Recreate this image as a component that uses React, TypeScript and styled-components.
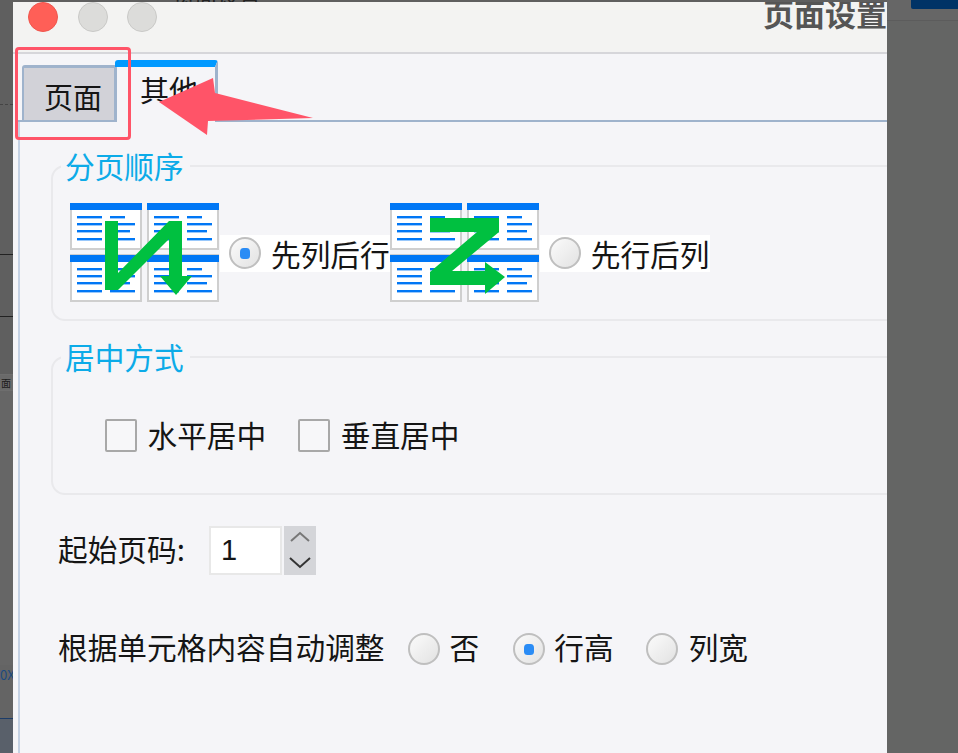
import React from "react";
import styled, { createGlobalStyle } from "styled-components";

const Global = createGlobalStyle`
  html, body { margin: 0; padding: 0; background: #646564; }
  body { font-family: "Noto Sans CJK SC", "Noto Sans", sans-serif; color: #151515; }
`;

const Page = styled.div`
  position: relative;
  width: 958px;
  height: 753px;
  overflow: hidden;
  display: grid;
  grid-template-columns: 13px 874px 71px;
  background: #646564;
`;

const LeftStrip = styled.div`
  display: flex;
  flex-direction: column;
  overflow: hidden;
`;

const StripRow = styled.div<{ $h: number; $line?: string; $bg?: string; $dash?: boolean }>`
  height: ${(p) => p.$h}px;
  flex: none;
  box-sizing: border-box;
  background: ${(p) => p.$bg ?? "#5f5f5f"};
  border-bottom: ${(p) => (p.$line ? `1px ${p.$dash ? "dashed" : "solid"} ${p.$line}` : "none")};
  font-size: 10px;
  line-height: ${(p) => p.$h}px;
  white-space: nowrap;
  overflow: hidden;
`;

const StripMark = styled.span`
  color: #1c1c1c;
  margin-left: 1px;
`;

const StripCode = styled.span`
  color: #1c4a80;
  font-size: 13px;
`;

const Column = styled.div`
  display: flex;
  flex-direction: column;
  min-width: 0;
`;

const TopEdge = styled.div`
  height: 2px;
  flex: none;
  overflow: hidden;
  background: #5f5f5f;
  padding-left: 160px;
  font-size: 22px;
  line-height: 2px;
  color: #222;
  white-space: nowrap;
`;

const TopEdgeText = styled.span`
  display: inline-block;
  margin-top: -14px;
  vertical-align: top;
  line-height: 16px;
`;

const Dialog = styled.div`
  flex: 1;
  min-height: 0;
  display: flex;
  flex-direction: column;
  overflow: hidden;
  background: #f5f5f8;
`;

const TitleBar = styled.div`
  height: 50px;
  flex: none;
  display: flex;
  align-items: flex-start;
  padding-left: 15px;
  background: #f3f3f2;
  border-bottom: 2px solid #d6d6da;
  overflow: hidden;
`;

const Lights = styled.div`
  display: flex;
  gap: 19.5px;
  flex: none;
`;

const Light = styled.span<{ $red?: boolean }>`
  width: 30px;
  height: 30px;
  box-sizing: border-box;
  border-radius: 50%;
  background: ${(p) => (p.$red ? "#ff5f57" : "#dcdcda")};
  border: 1px solid ${(p) => (p.$red ? "#f0564e" : "#c9c9c7")};
`;

const Title = styled.div`
  margin: -3px 0 0 606px;
  font-size: 31px;
  line-height: 28px;
  font-weight: 700;
  color: #555;
  white-space: nowrap;
`;

const TabStrip = styled.div`
  height: 68px;
  flex: none;
  display: flex;
  align-items: flex-end;
  padding-left: 5px;
`;

const TabLead = styled.div`
  width: 4px;
  height: 0;
  border-bottom: 2px solid #9fb3cc;
`;

const TabFill = styled.div`
  flex: 1;
  height: 0;
  border-bottom: 2px solid #9fb3cc;
`;

const InactiveTab = styled.div`
  width: 95px;
  height: 57px;
  box-sizing: border-box;
  display: flex;
  align-items: center;
  justify-content: center;
  padding: 4px 0 0 8px;
  font-size: 29px;
  background: #d2d2d8;
  border: 3px solid #9fb3cc;
  border-width: 3px 3px 2px 2px;
  border-radius: 3px 3px 0 0;
`;

const ActiveTab = styled.div`
  width: 103px;
  height: 62px;
  margin-left: -2px;
  box-sizing: border-box;
  display: flex;
  align-items: center;
  justify-content: center;
  padding: 0 0 12px 8px;
  font-size: 29px;
  border-top: 7px solid #0099ff;
  border-right: 3px solid #9fb3cc;
  border-radius: 3px 3px 0 0;
  position: relative;
`;

const Pane = styled.div`
  flex: 1;
  margin-left: 5px;
  border-left: 2px solid #c5d2e4;
  display: flex;
  flex-direction: column;
  align-items: flex-start;
  overflow: hidden;
`;

const Group = styled.fieldset<{ $top: number; $bottom: number }>`
  width: 880px;
  flex: none;
  box-sizing: border-box;
  margin: ${(p) => p.$top}px 0 0 31px;
  padding: 0 0 ${(p) => p.$bottom}px;
  border: 2px solid #e9e9ec;
  border-radius: 14px;
`;

const Legend = styled.legend`
  margin-left: 8px;
  padding: 0 6px 0 4px;
  font-size: 29.7px;
  line-height: 36px;
  color: #0cabe8;
`;

const OrderRow = styled.div`
  display: flex;
  align-items: center;
  margin: 19px 0 0 17px;
`;

const Band = styled.div`
  height: 37px;
  display: flex;
  align-items: center;
  background: #fff;
  padding-left: 9px;
  font-size: 29.7px;
  line-height: 37px;
  white-space: nowrap;
`;

const Circle = styled.span<{ $gap?: number }>`
  width: 32px;
  height: 32px;
  flex: none;
  box-sizing: border-box;
  display: flex;
  align-items: center;
  justify-content: center;
  border-radius: 50%;
  border: 2px solid #bfbfbf;
  background: linear-gradient(135deg, #fbfbfb, #e2e2e2);
  margin-right: ${(p) => p.$gap ?? 10}px;
`;

const Dot = styled.span`
  width: 10px;
  height: 11px;
  border-radius: 35%;
  background: #2a8cf5;
`;

const CheckRow = styled.div`
  display: flex;
  align-items: center;
  margin: 43px 0 0 52px;
  font-size: 29.7px;
  line-height: 33px;
`;

const Box = styled.span`
  width: 32px;
  height: 33px;
  flex: none;
  box-sizing: border-box;
  border: 2px solid #a8a8a8;
  border-radius: 2px;
  background: #f7f7f9;
  margin-right: 10.5px;
`;

const CheckText = styled.span`
  margin-right: 32px;
  padding-bottom: 2px;
`;

const StartRow = styled.div`
  display: flex;
  align-items: center;
  margin: 31px 0 0 38px;
  font-size: 29.7px;
  white-space: nowrap;
`;

const StartLabel = styled.span`
  padding-bottom: 4px;
`;

const InputBox = styled.div`
  width: 73px;
  height: 49px;
  box-sizing: border-box;
  margin-left: 24px;
  padding-left: 10px;
  background: #fff;
  border: 2px solid #e8e8e8;
  font-family: "Liberation Sans", sans-serif;
  font-size: 29px;
  line-height: 45px;
`;

const Spinner = styled.div`
  width: 32px;
  height: 49px;
  margin-left: 2px;
  background: #d4d5d9;
  flex: none;
`;

const FitRow = styled.div`
  display: flex;
  align-items: center;
  margin: 54px 0 0 38px;
  font-size: 29.7px;
  line-height: 36px;
  white-space: nowrap;
`;

const FitLabel = styled.span`
  margin-right: 23px;
  padding-bottom: 4px;
`;

const FitText = styled.span<{ $gap: number }>`
  margin-right: ${(p) => p.$gap}px;
  padding-bottom: 4px;
`;

const RightStrip = styled.div`
  display: flex;
  flex-direction: column;
`;

const RightTop = styled.div`
  height: 20px;
  flex: none;
  background: #666;
  border-bottom: 1px solid #5c5c5c;
  padding-left: 24px;
`;

const BlueChip = styled.div`
  height: 9px;
  background: #003366;
  border-radius: 0 0 0 2px;
`;

const RedFrame = styled.div`
  position: absolute;
  left: 15px;
  top: 47px;
  width: 116px;
  height: 93px;
  box-sizing: border-box;
  border: 3px solid #ff5468;
  border-radius: 4px;
  pointer-events: none;
`;

const ArrowSvg = styled.svg`
  position: absolute;
  left: 0;
  top: 0;
  pointer-events: none;
`;

const IconSvg = styled.svg`
  flex: none;
  display: block;
`;

const MiniPage = ({ x, y }: { x: number; y: number }) => {
  const ys = [14, 21, 28, 36];
  const w2 = [15, 25, 20, 25];
  return (
    <g transform={`translate(${x} ${y})`}>
      <rect x="1" y="0" width="70" height="46" fill="#fff" stroke="#cfcfcf" strokeWidth="2" />
      <rect x="0" y="0" width="72" height="7" fill="#0077f5" />
      {ys.map((ly, i) => (
        <g key={ly} fill="#0077f5">
          <rect x="7" y={ly - 1} width="25" height="2.4" />
          <rect x="40" y={ly - 1} width={w2[i]} height="2.4" />
        </g>
      ))}
    </g>
  );
};

const OrderIcon = ({ points }: { points: string }) => (
  <IconSvg width="150" height="100" viewBox="0 0 150 100">
    <MiniPage x={0} y={0} />
    <MiniPage x={77} y={0} />
    <MiniPage x={0} y={52} />
    <MiniPage x={77} y={52} />
    <polygon points={points} fill="#00c040" />
  </IconSvg>
);

const Radio = ({ on, gap }: { on?: boolean; gap?: number }) => (
  <Circle $gap={gap}>{on && <Dot />}</Circle>
);

const SpinIcon = () => (
  <svg width="32" height="49" viewBox="0 0 32 49" fill="none">
    <path d="M7 15 L16 7 L25 15" stroke="#777" strokeWidth="2" />
    <path d="M6 32 L16 41 L26 32" stroke="#333" strokeWidth="2" />
  </svg>
);

export default function App() {
  return (
    <>
      <Global />
      <Page>
        <LeftStrip>
          <StripRow $h={105} $line="#444" $dash />
          <StripRow $h={150} $line="#222" />
          <StripRow $h={62} $line="#222" />
          <StripRow $h={58} $line="#6e6e6e" />
          <StripRow $h={16} $line="#6e6e6e" $bg="#6a6a6a"><StripMark>面</StripMark></StripRow>
          <StripRow $h={274} $bg="#666" />
          <StripRow $h={20} $bg="#646464"><StripCode>0X</StripCode></StripRow>
          <StripRow $h={34} $line="#1c3c68" $bg="#646464" />
          <StripRow $h={34} $bg="#59606a" />
        </LeftStrip>
        <Column>
          <TopEdge><TopEdgeText>页面设置</TopEdgeText></TopEdge>
          <Dialog>
            <TitleBar>
              <Lights>
                <Light $red />
                <Light />
                <Light />
              </Lights>
              <Title>页面设置</Title>
            </TitleBar>
            <TabStrip>
              <TabLead />
              <InactiveTab>页面</InactiveTab>
              <ActiveTab>其他</ActiveTab>
              <TabFill />
            </TabStrip>
            <Pane>
              <Group $top={26} $bottom={16}>
                <Legend>分页顺序</Legend>
                <OrderRow>
                  <OrderIcon points="35,18 48,18 48,70 99,18 112,18 112,73 122,73 106,92 90,73 99,73 99,36 48,87 35,87" />
                  <Band>
                    <Radio on />
                    先列后行
                  </Band>
                  <OrderIcon points="40,15 109,15 109,29 62,68 95,68 95,59 115,74 95,91 95,82 40,82 40,69 87,29 40,29" />
                  <Band>
                    <Radio />
                    先行后列
                  </Band>
                </OrderRow>
              </Group>
              <Group $top={18} $bottom={40}>
                <Legend>居中方式</Legend>
                <CheckRow>
                  <Box />
                  <CheckText>水平居中</CheckText>
                  <Box />
                  <CheckText>垂直居中</CheckText>
                </CheckRow>
              </Group>
              <StartRow>
                <StartLabel>起始页码:</StartLabel>
                <InputBox>1</InputBox>
                <Spinner><SpinIcon /></Spinner>
              </StartRow>
              <FitRow>
                <FitLabel>根据单元格内容自动调整</FitLabel>
                <Radio />
                <FitText $gap={34}>否</FitText>
                <Radio on gap={9} />
                <FitText $gap={32}>行高</FitText>
                <Radio gap={11} />
                <FitText $gap={0}>列宽</FitText>
              </FitRow>
            </Pane>
          </Dialog>
        </Column>
        <RightStrip>
          <RightTop><BlueChip /></RightTop>
        </RightStrip>
        <RedFrame />
        <ArrowSvg width="958" height="753" viewBox="0 0 958 753">
          <polygon points="159,102 213,78 215,93 313,118 208,121 207,135" fill="#ff5468" />
        </ArrowSvg>
      </Page>
    </>
  );
}
